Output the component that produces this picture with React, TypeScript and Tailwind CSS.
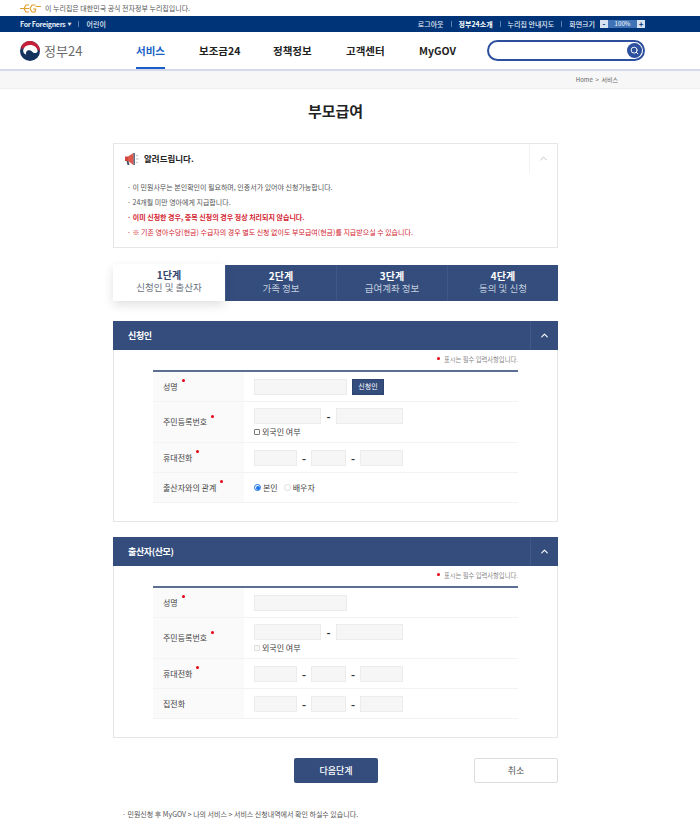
import { ChevronUp, Search } from "lucide-react";

const font = { fontFamily: '"Noto Sans CJK KR", "Noto Sans", sans-serif' };

function Required() {
  return <span className="ml-1 mb-3 inline-block size-[3px] rounded-full bg-[#e60012]" />;
}

function Field({ className = "w-[67px]" }: { className?: string }) {
  return <div className={`h-4 border border-[#ececec] bg-[#f6f6f6] ${className}`} />;
}

function Dash() {
  return <span className="w-[14px] text-center text-[11px] font-bold leading-4 text-[#333]">-</span>;
}

function Row({
  label,
  required,
  height,
  children,
}: {
  label: string;
  required?: boolean;
  height: string;
  children: React.ReactNode;
}) {
  return (
    <div className={`flex border-b border-[#f3f3f3] ${height}`}>
      <div className="flex w-[91px] shrink-0 items-center bg-[#fafafa] pl-[10px] text-[8px] text-[#444]">
        {label}
        {required && <Required />}
      </div>
      <div className="flex flex-1 flex-col justify-center pl-[10px]">{children}</div>
    </div>
  );
}

function PhoneField() {
  return (
    <div className="flex">
      <Field className="w-[43px]" />
      <Dash />
      <Field className="w-[35px]" />
      <Dash />
      <Field className="w-[43px]" />
    </div>
  );
}

function ResidentField({ disabled }: { disabled?: boolean }) {
  return (
    <>
      <div className="mt-[1px] flex">
        <Field />
        <span className="w-[15px] text-center text-[11px] font-bold leading-4 text-[#333]">-</span>
        <Field />
      </div>
      <div className="mt-[3px] flex h-[11px] items-center gap-[2px] text-[8px] text-[#444]">
        <span
          className={`size-[6px] rounded-[1px] border ${disabled ? "border-[#ddd] bg-[#f8f8f8]" : "border-[#777] bg-white"}`}
        />
        외국인 여부
      </div>
    </>
  );
}

function Section({
  title,
  bottom,
  children,
}: {
  title: string;
  bottom: string;
  children: React.ReactNode;
}) {
  return (
    <section className="ml-[113px] w-[445px] border border-t-0 border-[#e6e6e6]">
      <div className="-mx-px flex h-[29px] items-center justify-between bg-[#344d7d] pl-[15px] text-white">
        <h2 className="text-[9px] font-bold tracking-[-0.4px]">{title}</h2>
        <div className="flex h-full w-[28px] items-center justify-center border-l border-[#3f5888]">
          <ChevronUp size={11} strokeWidth={2.5} />
        </div>
      </div>
      <div className={`mx-[39px] ${bottom}`}>
        <p className="flex h-[20px] items-center justify-end text-[6.3px] text-[#888]">
          <span className="mr-[4px] mb-[4px] size-[3px] rounded-full bg-[#e60012]" />
          표시는 필수 입력사항입니다.
        </p>
        <div className="border-t-2 border-[#5a6f92]">{children}</div>
      </div>
    </section>
  );
}

function Divider({ className = "mx-[7px]" }: { className?: string }) {
  return <span className={`h-[6px] w-px bg-[#5b7fb0] ${className}`} />;
}

export default function App() {
  return (
    <div className="h-[840px] w-[700px] overflow-hidden bg-white" style={font}>
      {/* government banner */}
      <div className="flex h-4 items-center pl-5 text-[7px] text-[#555]">
        <svg width="21" height="9" viewBox="0 0 21 9" fill="none" stroke="#e0a030" strokeWidth="1.2">
          <path d="M0 4.500h5M9 1H6L4 4.500 6 8h3M4.500 4.500H9M15.500 1H12L10 4.500 12 8h3l.7-3H13M15.500 2.500H21" />
        </svg>
        <span className="ml-[4px]">이 누리집은 대한민국 공식 전자정부 누리집입니다.</span>
      </div>

      {/* utility bar */}
      <div className="flex h-4 items-center justify-between bg-[#003478] pl-5 pr-[55px] text-[7px] font-medium text-[#e4ebf5]">
        <div className="flex items-center">
          <span className="font-bold tracking-[-0.3px]">For Foreigners</span>
          <span className="ml-[2px] text-[4px]">▼</span>
          <Divider className="ml-[6px] mr-[8px]" />
          <span>어린이</span>
        </div>
        <div className="flex items-center">
          <span>로그아웃</span>
          <Divider />
          <span className="font-bold text-white">정부24소개</span>
          <Divider />
          <span>누리집 안내지도</span>
          <Divider />
          <span>화면크기</span>
          <span className="ml-[5px] flex h-2 w-[45px] items-center justify-between bg-[#3f73b5]">
            <span className="flex size-2 items-center justify-center bg-[#d7e3f2] text-[8px] font-bold leading-none text-[#003478]">-</span>
            <span className="text-[6px] leading-none">100%</span>
            <span className="flex size-2 items-center justify-center bg-[#d7e3f2] text-[8px] font-bold leading-none text-[#003478]">+</span>
          </span>
        </div>
      </div>

      {/* main nav */}
      <header className="flex h-[39px] items-center border-b-2 border-[#d5daea] pl-5">
        <svg width="20" height="20" viewBox="0 0 20 20" className="shrink-0">
          <circle cx="10" cy="10" r="10" fill="#15325f" />
          <path d="M1.500 4.700A10 10 0 0 1 20 10.300C18.800 9.200 17.400 8 15.500 7.700 12 7 9 6.700 6 6.800 4.200 6.900 2.800 7.200 1.200 8.500Z" fill="#c4203a" />
          <path d="M3.200 10C3.200 6.800 6 4 10 4c4.400 0 7.300 2.600 7.700 6.200-.9 2.300-4 2.500-5.500.6C10.800 9 7.700 8.700 6.500 10.500 5.800 11.700 5.900 12.800 6.200 13.700 4.500 13 3.200 11.700 3.200 10Z" fill="#fff" />
        </svg>
        <span className="ml-[4px] w-[36px] whitespace-nowrap text-[13px] leading-none text-[#6b6b6b]">정부24</span>
        <nav className="ml-[56px] flex text-[10.5px] font-bold text-[#222]">
          <span className="relative w-[63px] text-[#1a5fc7]">
            서비스
            <span className="absolute -bottom-[11px] left-0 h-[2px] w-[29px] bg-[#1a5fc7]" />
          </span>
          <span className="w-[74px]">보조금24</span>
          <span className="w-[73px]">정책정보</span>
          <span className="w-[73px]">고객센터</span>
          <span>MyGOV</span>
        </nav>
        <div className="ml-auto mr-[55px] flex h-[21px] w-[158px] items-center justify-end rounded-full border-2 border-[#2c4f9e] pr-px">
          <span className="flex size-[15px] items-center justify-center rounded-full bg-[#2c4f9e] text-white">
            <Search size={9} strokeWidth={2.5} />
          </span>
        </div>
      </header>

      {/* breadcrumb */}
      <div className="flex h-[18px] items-center justify-end border-b border-[#eee] bg-[#f7f7f7] pr-[82px] text-[6px] text-[#666]">
        Home &nbsp;&gt;&nbsp; 서비스
      </div>

      <h1 className="ml-[113px] mt-[10px] h-[44px] w-[445px] text-center text-[15px] font-bold leading-[23px] text-[#222]">부모급여</h1>

      {/* notice */}
      <section className="ml-[113px] h-[105px] w-[445px] border border-[#e6e6e6]">
        <div className="flex h-[29px] items-center justify-between pl-[10px]">
          <div className="flex items-center gap-[5px] text-[8.5px] font-bold text-[#222]">
            <svg width="15" height="14" viewBox="0 0 15 14">
              <path d="M1 4.500h3V9H1z" fill="#d2453b" />
              <path d="M4 4.500 9.500 1v12L4 9z" fill="#e0584c" />
              <path d="M2.500 9h2l1 4h-2z" fill="#4a5568" />
              <path d="M9.500 1h1.300v12H9.500z" fill="#3d4a63" />
              <path d="M12 4l2-1M12 7h2.500M12 10l2 1" stroke="#aaa" strokeWidth=".8" />
            </svg>
            알려드립니다.
          </div>
          <div className="flex h-full w-[28px] items-center justify-center border-l border-[#f2f2f2] text-[#bbb]">
            <ChevronUp size={11} />
          </div>
        </div>
        <ul className="flex flex-col gap-[6.4px] pl-[13px] pt-[10px] text-[7px] leading-[8.5px]">
          <li className="text-[#555]">· 이 민원사무는 본인확인이 필요하며, 인증서가 있어야 신청가능합니다.</li>
          <li className="text-[#555]">· 24개월 미만 영아에게 지급합니다.</li>
          <li className="font-bold text-[#d3222f]">· 이미 신청한 경우, 중복 신청의 경우 정상 처리되지 않습니다.</li>
          <li className="text-[#d3222f]">· ※ 기존 영아수당(현금) 수급자의 경우 별도 신청 없이도 부모급여(현금)를 지급받으실 수 있습니다.</li>
        </ul>
      </section>

      {/* steps */}
      <div className="ml-[113px] mt-[17px] flex h-[36px] w-[445px] bg-[#344d7d] text-center text-[9.5px] leading-[12px] text-[#c3cede]">
        {[
          ["1단계", "신청인 및 출산자"],
          ["2단계", "가족 정보"],
          ["3단계", "급여계좌 정보"],
          ["4단계", "동의 및 신청"],
        ].map(([step, name], i) => (
          <div
            key={step}
            className={
              i === 0
                ? "-mt-px h-[37px] w-[112px] bg-white pt-[5px] text-[#6b7380] shadow-[0_4px_10px_rgba(0,0,0,0.12)]"
                : "w-[111px] border-l border-[#3f5888] pt-[5px] first:border-l-0"
            }
          >
            <div className={`text-[10px] font-bold ${i === 0 ? "text-[#34476e]" : "text-white"}`}>{step}</div>
            <div>{name}</div>
          </div>
        ))}
      </div>

      <div className="mt-5">
        <Section title="신청인" bottom="h-[171px]">
          <Row label="성명" required height="h-[30px]">
            <div className="flex items-center gap-[5px]">
              <Field className="w-[93px]" />
              <button className="h-4 w-8 border border-[#2d446f] bg-[#344d7d] text-[7px] text-white">신청인</button>
            </div>
          </Row>
          <Row label="주민등록번호" required height="h-[41px]">
            <ResidentField />
          </Row>
          <Row label="휴대전화" required height="h-[30px]">
            <PhoneField />
          </Row>
          <Row label="출산자와의 관계" required height="h-[30px]">
            <div className="flex items-center text-[8px] text-[#444]">
              <span className="flex size-[7px] items-center justify-center rounded-full border border-[#1a73e8] bg-white">
                <span className="size-[4px] rounded-full bg-[#1a73e8]" />
              </span>
              <span className="ml-[2px]">본인</span>
              <span className="ml-[6px] size-[7px] rounded-full border border-[#ddd]" />
              <span className="ml-[2px]">배우자</span>
            </div>
          </Row>
        </Section>
      </div>

      <div className="mt-[15px]">
        <Section title="출산자(산모)" bottom="h-[171px]">
          <Row label="성명" required height="h-[30px]">
            <Field className="w-[93px]" />
          </Row>
          <Row label="주민등록번호" required height="h-[41px]">
            <ResidentField disabled />
          </Row>
          <Row label="휴대전화" required height="h-[30px]">
            <PhoneField />
          </Row>
          <Row label="집전화" height="h-[30px]">
            <PhoneField />
          </Row>
        </Section>
      </div>

      {/* actions */}
      <div className="mt-[20px] flex h-[25px]">
        <button className="ml-[294px] h-[25px] w-[84px] rounded-[2px] bg-[#344d7d] text-[9px] font-medium text-white">다음단계</button>
        <button className="ml-[96px] h-[25px] w-[84px] rounded-[2px] border border-[#ddd] bg-white text-[9px] text-[#555]">취소</button>
      </div>

      <p className="ml-[122px] mt-[26px] text-[7px] leading-[10px] text-[#555]">
        · 민원신청 후 MyGOV &gt; 나의 서비스 &gt; 서비스 신청내역에서 확인 하실수 있습니다.
      </p>
    </div>
  );
}
